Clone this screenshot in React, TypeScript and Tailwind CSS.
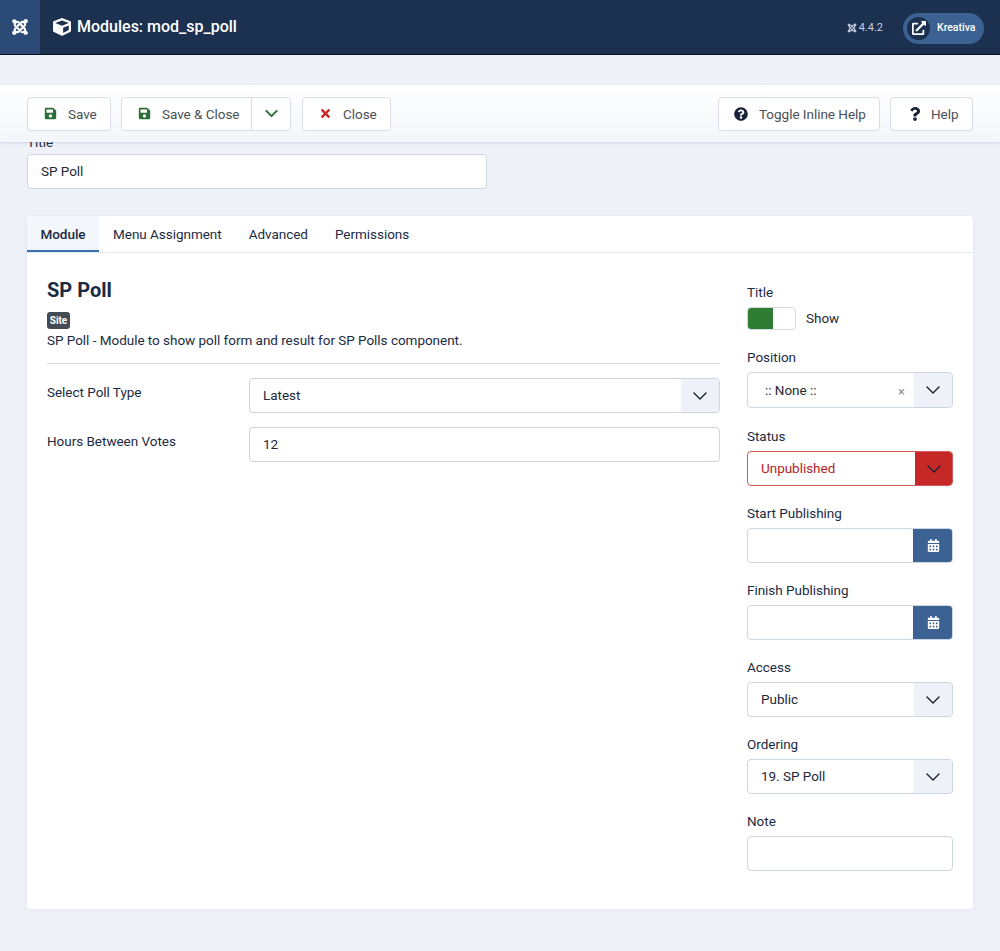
import { FaCalendarAlt, FaCube, FaExternalLinkAlt, FaJoomla, FaQuestion, FaQuestionCircle, FaSave, FaTimes } from "react-icons/fa"
import { ChevronDown } from "lucide-react"
import type { ReactNode } from "react"

function ToolButton({ icon, label, className = "" }: { icon: ReactNode; label: string; className?: string }) {
  return (
    <button className={`h-[34px] flex items-center bg-white border border-[#d8dde6] rounded text-[13.5px] tracking-[-0.03px] text-[#495057] ${className}`}>
      {icon}
      <span className="pt-px">{label}</span>
    </button>
  )
}

function Field({ label, children }: { label: string; children: ReactNode }) {
  return (
    <div className="mb-[15px]">
      <div className="h-[24px] mb-[3px] flex items-center text-[#1c2b44]">{label}</div>
      {children}
    </div>
  )
}

function SelectBox({ value }: { value: string }) {
  return (
    <div className="h-[35px] flex items-center bg-white border border-[#cdd5e3] rounded overflow-hidden">
      <span className="flex-1 pl-[13px] text-[#1f2937]">{value}</span>
      <span className="w-[38px] h-full bg-[#eef1f8] flex items-center justify-center">
        <ChevronDown size={24} strokeWidth={1.4} className="text-[#16202e]" />
      </span>
    </div>
  )
}

function DateBox() {
  return (
    <div className="h-[35px] flex bg-white border border-[#cdd5e3] rounded overflow-hidden">
      <span className="flex-1" />
      <span className="w-[40px] -my-px -mr-px bg-[#3b6292] flex items-center justify-center text-white">
        <FaCalendarAlt size={13} />
      </span>
    </div>
  )
}

export default function App() {
  return (
    <div className="min-h-[951px] bg-[#eef1f8] font-['Roboto',sans-serif] text-[13.5px] tracking-[-0.03px] text-[#1c2b44]">
      <header className="h-[55px] flex items-center bg-[#1c3050] border-b border-[#0b1220] text-white tracking-normal">
        <div className="w-[40px] h-full bg-[#2b4a75] flex items-center justify-center">
          <FaJoomla size={18} />
        </div>
        <FaCube size={18} className="ml-[13px]" />
        <h1 className="ml-[6px] text-[16px] font-medium">Modules: mod_sp_poll</h1>
        <div className="ml-auto mt-[2px] mr-px flex items-center text-[11px] text-[#c3cede] gap-[2px]">
          <FaJoomla size={10} />
          <span>4.4.2</span>
        </div>
        <div className="ml-[19px] mt-[2px] mr-[16px] w-[81px] h-[31px] rounded-full bg-[#3b6292] flex items-center pl-[4px]">
          <span className="w-[23px] h-[23px] rounded-full bg-[#1c3050] flex items-center justify-center">
            <FaExternalLinkAlt size={14} />
          </span>
          <span className="ml-[7px] text-[10.5px] font-medium">Kreativa</span>
        </div>
      </header>

      <div className="relative z-10 mt-[30px] h-[57px] flex items-center px-[27px] bg-gradient-to-b from-white to-[#f3f6fa] shadow-[0_1px_3px_rgba(30,50,80,0.15)]">
        <ToolButton className="w-[84px] pl-[16px]" icon={<FaSave size={13} className="text-[#2b6e36] mr-[11px]" />} label="Save" />
        <div className="ml-[10px] h-[34px] flex bg-white border border-[#d8dde6] rounded text-[#495057]">
          <button className="w-[129px] pl-[16px] flex items-center">
            <FaSave size={13} className="text-[#2b6e36] mr-[11px]" />
            <span className="pt-px">Save &amp; Close</span>
          </button>
          <button className="w-[39px] border-l border-[#d8dde6] flex items-center justify-center">
            <ChevronDown size={21} strokeWidth={2.2} className="text-[#2b6e36]" />
          </button>
        </div>
        <ToolButton className="ml-[11px] w-[89px] pl-[16px]" icon={<FaTimes size={13} className="text-[#c62828] mr-[11px]" />} label="Close" />
        <ToolButton className="ml-auto w-[162px] pl-[15px]" icon={<FaQuestionCircle size={14} className="text-[#16233a] mr-[11px]" />} label="Toggle Inline Help" />
        <ToolButton className="ml-[10px] w-[83px] pl-[17px]" icon={<FaQuestion size={14} className="text-[#16233a] mr-[9px]" />} label="Help" />
      </div>

      <main className="px-[27px]">
        <div className="-mt-[12px] h-[24px] flex items-center">Title</div>
        <div className="w-[460px] h-[35px] flex items-center px-[13px] bg-white border border-[#cdd5e3] rounded text-[#1f2937]">SP Poll</div>

        <section className="mt-[27px] h-[693px] bg-white rounded shadow-[0_1px_4px_rgba(30,50,80,0.06)]">
          <nav className="h-[37px] flex border-b border-[#e3e7ee]">
            <div className="w-[72px] h-[36px] pt-[2px] flex items-center justify-center font-medium bg-[#f3f6fa] border-b-2 border-[#3b6fae]">Module</div>
            <div className="ml-[14px] flex items-center">Menu Assignment</div>
            <div className="ml-[27px] flex items-center">Advanced</div>
            <div className="ml-[27px] flex items-center">Permissions</div>
          </nav>

          <div className="flex px-[20px] pt-[27px]">
            <div className="w-[673px]">
              <h2 className="h-[24px] flex items-center text-[20px] tracking-normal font-bold mt-[-2px]">SP Poll</h2>
              <span className="mt-[10px] block w-[23px] h-[17px] rounded-[3px] bg-[#434b55] text-white text-[10px] font-bold leading-[17px] text-center">Site</span>
              <p className="h-[22px] flex items-center">SP Poll - Module to show poll form and result for SP Polls component.</p>
              <hr className="mt-[12px] border-t border-[#d5d9e0]" />
              <div className="mt-[14px] flex">
                <label className="w-[202px] h-[28px] flex items-center">Select Poll Type</label>
                <div className="flex-1"><SelectBox value="Latest" /></div>
              </div>
              <div className="mt-[14px] flex">
                <label className="w-[202px] h-[28px] flex items-center">Hours Between Votes</label>
                <div className="flex-1 h-[35px] flex items-center pb-px px-[13px] bg-white border border-[#cdd5e3] rounded text-[#1f2937]">12</div>
              </div>
            </div>

            <aside className="ml-[27px] w-[206px]">
              <div className="mb-[15px]">
                <div className="h-[24px] mb-[3px] flex items-center">Title</div>
                <div className="flex items-center">
                  <div className="w-[49px] h-[23px] border border-[#d3d9e3] rounded bg-white overflow-hidden">
                    <div className="w-[25px] h-full bg-[#2e7d32]" />
                  </div>
                  <span className="ml-[10px] text-[#1f2937]">Show</span>
                </div>
              </div>
              <div className="mb-[16px]">
                <div className="h-[24px] mb-[3px] flex items-center">Position</div>
                <div className="h-[36px] flex items-center bg-white border border-[#cdd5e3] rounded overflow-hidden">
                  <span className="flex-1 pl-[17px] text-[#1f2937]">:: None ::</span>
                  <span className="mr-[9px] mt-[3px] text-[13px] text-[#868e96]">×</span>
                  <span className="w-[38px] h-full bg-[#eef1f8] flex items-center justify-center">
                    <ChevronDown size={24} strokeWidth={1.4} className="text-[#16202e]" />
                  </span>
                </div>
              </div>
              <Field label="Status">
                <div className="h-[35px] flex items-center bg-white border border-[#cf5a5a] rounded overflow-hidden">
                  <span className="flex-1 pl-[13px] text-[#b71c1c]">Unpublished</span>
                  <span className="w-[37px] h-full bg-[#c62828] flex items-center justify-center">
                    <ChevronDown size={24} strokeWidth={1.4} className="text-[#16202e]" />
                  </span>
                </div>
              </Field>
              <Field label="Start Publishing"><DateBox /></Field>
              <Field label="Finish Publishing"><DateBox /></Field>
              <Field label="Access"><SelectBox value="Public" /></Field>
              <Field label="Ordering"><SelectBox value="19. SP Poll" /></Field>
              <Field label="Note">
                <div className="h-[35px] bg-white border border-[#cdd5e3] rounded" />
              </Field>
            </aside>
          </div>
        </section>
      </main>
    </div>
  )
}
